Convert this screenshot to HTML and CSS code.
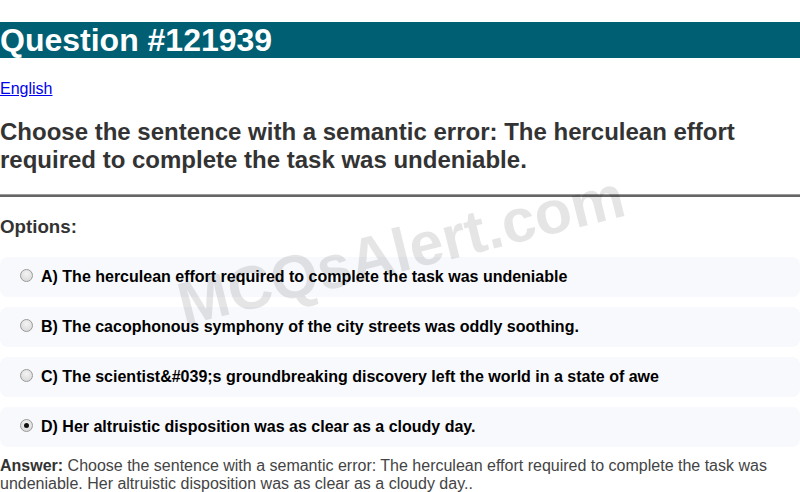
FILE: index.html
```html
<!DOCTYPE html>
<html lang="en">
<head>
<meta charset="utf-8">
<title>Question #121939</title>
<link rel="stylesheet" href="styles.css">
</head>
<body>
<div class="page">
  <h1 class="title">Question #121939</h1>
  <div class="lang"><a href="#">English</a></div>
  <h2 class="question">Choose the sentence with a semantic error: The herculean effort required to complete the task was undeniable.</h2>
  <hr class="rule">
  <h3 class="options-label">Options:</h3>
  <div class="options">
    <div class="option"><span class="radio"></span><span class="opt-text">A) The herculean effort required to complete the task was undeniable</span></div>
    <div class="option"><span class="radio"></span><span class="opt-text">B) The cacophonous symphony of the city streets was oddly soothing.</span></div>
    <div class="option"><span class="radio"></span><span class="opt-text">C) The scientist&amp;#039;s groundbreaking discovery left the world in a state of awe</span></div>
    <div class="option"><span class="radio checked"></span><span class="opt-text">D) Her altruistic disposition was as clear as a cloudy day.</span></div>
  </div>
  <div class="answer"><b>Answer:</b> Choose the sentence with a semantic error: The herculean effort required to complete the task was undeniable. Her altruistic disposition was as clear as a cloudy day..</div>
  <div class="watermark">MCQsAlert.com</div>
</div>
</body>
</html>
```

FILE: styles.css
```css
html, body {
  margin: 0;
  padding: 0;
  background: #fff;
}
body {
  font-family: "Liberation Sans", Arial, sans-serif;
  font-size: 16px;
}
.page {
  position: relative;
  width: 800px;
  overflow: hidden;
}
.title {
  margin: 22px 0;
  background: #005f73;
  color: #fff;
  font-size: 32px;
  font-weight: bold;
  line-height: 36px;
}
.lang a {
  color: #0000ee;
  text-decoration: underline;
}
.question {
  margin: 20px 0;
  font-size: 24px;
  font-weight: bold;
  color: #333;
  line-height: 28px;
}
.rule {
  margin: 19px 0 0;
  border: none;
  border-top: 1px solid #999;
  border-bottom: 2px solid #666;
  height: 0;
}
.options-label {
  margin: 19px 0;
  font-size: 18.72px;
  font-weight: bold;
  color: #333;
}
.options {
  display: flex;
  flex-direction: column;
  gap: 10px;
}
.option {
  display: flex;
  align-items: center;
  gap: 8px;
  height: 40px;
  padding: 0 20px;
  background: #f8f9fc;
  border-radius: 8px;
  font-weight: bold;
  color: #000;
}
.radio {
  position: relative;
  box-sizing: border-box;
  width: 13px;
  height: 13px;
  border-radius: 50%;
  border: 1px solid #9a9a9a;
  background: radial-gradient(circle at 50% 35%, #f4f4f4, #d4d4d4);
  flex: none;
  margin-top: -3px;
}
.radio.checked::after {
  content: "";
  position: absolute;
  left: 3px;
  top: 3px;
  width: 5px;
  height: 5px;
  border-radius: 50%;
  background: #111;
}
.answer {
  margin-top: 10px;
  color: #444;
  line-height: 18px;
}
.answer b {
  color: #333;
}
.watermark {
  position: absolute;
  left: 401px;
  top: 250px;
  transform: translate(-50%, -50%) rotate(-14deg);
  font-size: 61px;
  font-weight: bold;
  color: rgba(0, 0, 0, 0.1);
  white-space: nowrap;
  pointer-events: none;
}
```
